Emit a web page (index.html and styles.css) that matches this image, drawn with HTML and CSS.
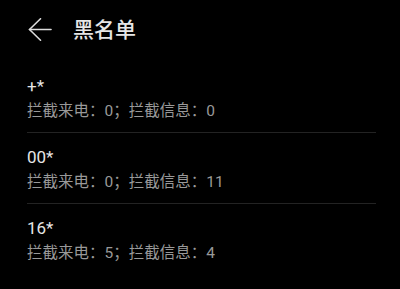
FILE: index.html
```html
<!DOCTYPE html>
<html lang="zh-CN">
<head>
<meta charset="utf-8">
<link rel="stylesheet" href="styles.css">
</head>
<body>
<header class="header">
  <svg class="back" width="24" height="24" viewBox="0 0 24 24" fill="none" stroke="#dcdcdc" stroke-width="1.6" stroke-linecap="round" stroke-linejoin="round">
    <path d="M1.5 11.5 H23"/>
    <path d="M12.5 0.8 L1.5 11.5 L12.5 22.2"/>
  </svg>
  <h1 class="title">黑名单</h1>
</header>
<ul class="list">
  <li class="item">
    <div class="num">+*</div>
    <div class="info">拦截来电：0；拦截信息：0</div>
  </li>
  <li class="item">
    <div class="num">00*</div>
    <div class="info">拦截来电：0；拦截信息：11</div>
  </li>
  <li class="item">
    <div class="num">16*</div>
    <div class="info">拦截来电：5；拦截信息：4</div>
  </li>
</ul>
</body>
</html>
```
FILE: styles.css
```css
html, body {
  margin: 0;
  padding: 0;
  background: #000;
}
body {
  font-family: Roboto, "Noto Sans CJK SC", sans-serif;
  color: #e6e6e6;
}
.header {
  display: flex;
  align-items: center;
  height: 60px;
  padding-left: 28px;
  gap: 21px;
}
.back {
  display: block;
  margin-top: -1px;
}
.title {
  margin: 0;
  font-size: 21px;
  font-weight: 500;
  color: #e6e6e6;
  line-height: 28px;
}
.list {
  list-style: none;
  margin: 2px 0 0 0;
  padding: 0 24px 0 27px;
}
.item {
  padding: 13px 0 10px;
  border-bottom: 1px solid #232323;
}
.item:last-child {
  border-bottom: none;
}
.num {
  font-size: 17px;
  line-height: 22px;
  color: #e6e6e6;
}
.info {
  margin-top: 4px;
  font-size: 15.5px;
  line-height: 21px;
  color: #999;
}
```
